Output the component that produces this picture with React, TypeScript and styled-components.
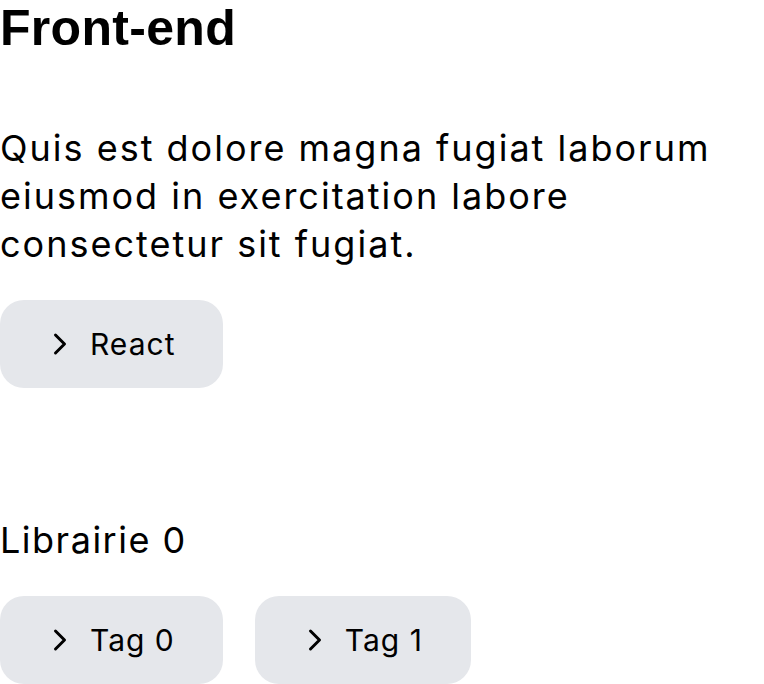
import React from "react";
import styled, { createGlobalStyle } from "styled-components";

const GlobalStyle = createGlobalStyle`
  body {
    margin: 0;
    background: #ffffff;
    font-family: Inter, "Liberation Sans", sans-serif;
    color: #000000;
  }
`;

const Page = styled.div`
  display: flex;
  flex-direction: column;
  align-items: flex-start;
`;

const Title = styled.h1`
  margin: 0;
  font-family: "Liberation Sans", Arial, sans-serif;
  font-weight: 700;
  font-size: 50px;
  line-height: 56px;
  letter-spacing: 0.3px;
`;

const Description = styled.p`
  margin: 68px 0 0;
  font-size: 36px;
  line-height: 48px;
  letter-spacing: 2px;
`;

const TagRow = styled.div<{ $top: number }>`
  display: flex;
  gap: 32px;
  margin-top: ${p => p.$top}px;
`;

const Tag = styled.div`
  display: inline-flex;
  align-items: center;
  gap: 12px;
  height: 88px;
  padding: 0 48px 0 42px;
  border-radius: 24px;
  background: #e5e7eb;
  font-size: 30px;
  letter-spacing: 1px;
`;

const Subtitle = styled.h2`
  margin: 128px 0 0;
  font-size: 36px;
  font-weight: 400;
  line-height: 48px;
  letter-spacing: 1.5px;
`;

const Chevron = () => (
  <svg width="36" height="36" viewBox="0 0 24 24" fill="none" stroke="currentColor" strokeWidth="2" strokeLinecap="round" strokeLinejoin="round">
    <path d="m9 18 6-6-6-6" />
  </svg>
);

const TagButton = ({ label }: { label: string }) => (
  <Tag>
    <Chevron />
    {label}
  </Tag>
);

export default function App() {
  return (
    <Page>
      <GlobalStyle />
      <Title>Front-end</Title>
      <Description>
        Quis est dolore magna fugiat laborum eiusmod in exercitation labore consectetur sit fugiat.
      </Description>
      <TagRow $top={32}>
        <TagButton label="React" />
      </TagRow>
      <Subtitle>Librairie 0</Subtitle>
      <TagRow $top={32}>
        <TagButton label="Tag 0" />
        <TagButton label="Tag 1" />
      </TagRow>
    </Page>
  );
}
